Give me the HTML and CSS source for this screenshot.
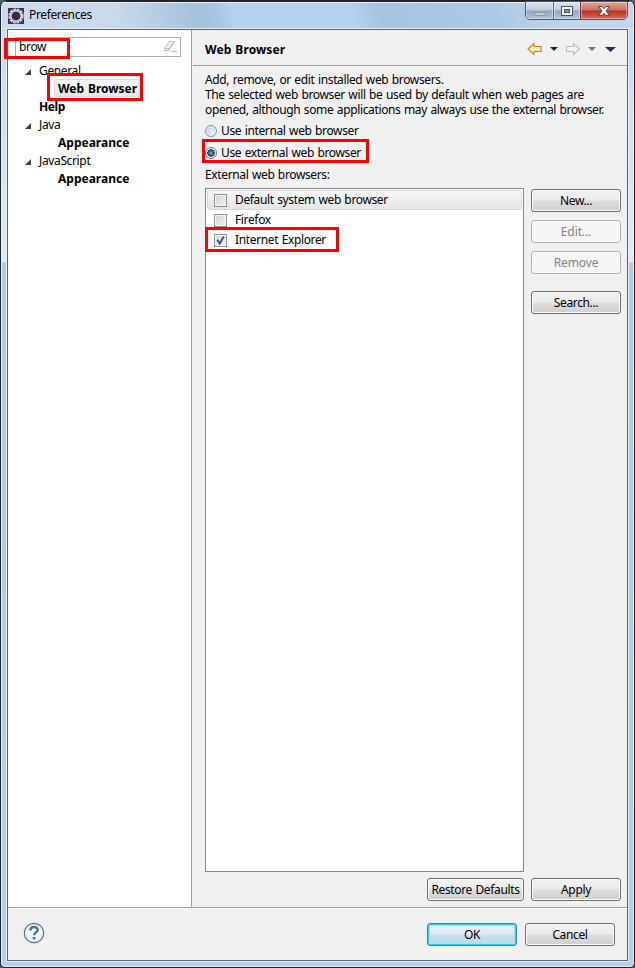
FILE: index.html
```html
<!DOCTYPE html>
<html lang="en">
<head>
  <meta charset="UTF-8" />
  <title>Preferences</title>
  <link rel="stylesheet" href="styles.css">
</head>
<body>
  <div class="window">
    <!-- TITLE BAR -->
    <div class="titlebar">
      <svg class="app-icon" width="16" height="16" viewBox="0 0 16 16">
        <rect width="16" height="16" fill="#40345f"/>
        <circle cx="8" cy="8" r="6.500" fill="none" stroke="#d8d6de" stroke-width="2.200" stroke-dasharray="2.600 0.800"/>
        <circle cx="8" cy="8" r="5.200" fill="none" stroke="#d0ced4" stroke-width="1.800"/>
        <circle cx="8" cy="8" r="4.200" fill="#332c45"/>
      </svg>
      <span class="title">Preferences</span>
      <div class="controls">
        <div class="ctl"><svg width="14" height="14" viewBox="0 0 14 14"><rect x="1.5" y="8.5" width="11" height="3" fill="#c4ced9" stroke="#8b98a9"/></svg></div>
        <div class="ctl ctl-max"><svg width="14" height="14" viewBox="0 0 14 14"><rect x="1.5" y="2.5" width="11" height="9" fill="#f4f4f4" stroke="#4c5366"/><rect x="4.5" y="5.5" width="5" height="3" fill="#8396ae" stroke="#4c5366"/></svg></div>
        <div class="ctl ctl-close"><svg width="14" height="14" viewBox="0 0 14 14"><path d="M1.5 2.5h3.6L7 4.700l1.900-2.200h3.600L9 7l3.500 4.500H8.900L7 9.300l-1.900 2.200H1.500L5 7z" fill="#f5f5f5" stroke="#5b4852"/></svg></div>
      </div>
    </div>

    <div class="client">
      <div class="main">
        <!-- LEFT TREE -->
        <div class="sidebar">
          <div class="search">
            <span>brow</span>
            <svg width="15" height="13" viewBox="0 0 15 13"><path d="M6.500 1.500h5l-5.500 9h-4.500v-2z" fill="#f2f2f2" stroke="#bcbcbc"/><path d="M2 8.500h4.300l4.700-7M6.300 8.500l-.3 2M8 11.500h6" fill="none" stroke="#bcbcbc"/></svg>
          </div>
          <ul class="tree">
            <li><i class="arrow"></i>General</li>
            <li class="child"><span class="selected">Web Browser</span></li>
            <li class="bold">Help</li>
            <li><i class="arrow"></i>Java</li>
            <li class="child">Appearance</li>
            <li><i class="arrow"></i>JavaScript</li>
            <li class="child">Appearance</li>
          </ul>
        </div>

        <!-- PREFERENCE PAGE -->
        <div class="page">
          <div class="page-head">
            <h1>Web Browser</h1>
            <svg class="nav" width="92" height="14" viewBox="0 0 92 14">
              <path d="M1 7l6-5.500v3h7v5H7v3z" fill="#fdeeb0" stroke="#b9862a" stroke-width="1.100"/>
              <path d="M23 5h8l-4 4z" fill="#222"/>
              <path d="M52.500 7l-6-5.500v3h-7v5h7v3z" fill="#f4f4f1" stroke="#bdbdb5" stroke-width="1.100"/>
              <path d="M61 5h8l-4 4z" fill="#77747c"/>
              <path d="M78 5h11l-5.500 5z" fill="#2e2a58"/>
            </svg>
          </div>
          <div class="page-body">
            <p class="desc">Add, remove, or edit installed web browsers.<br>
              The selected web browser will be used by default when web pages are<br>
              opened, although some applications may always use the external browser.</p>
            <div class="radio"><i class="dot"></i><span>Use internal web browser</span></div>
            <div class="radio"><i class="dot on"></i><span>Use external web browser</span></div>
            <div class="label">External web browsers:</div>
            <div class="columns">
              <div class="list">
                <div class="item focused"><i class="check"></i><span>Default system web browser</span></div>
                <div class="item"><i class="check"></i><span>Firefox</span></div>
                <div class="item"><i class="check"><svg width="11" height="11" viewBox="0 0 11 11"><path d="M2.300 4.800l2.400 3.700L8.800 1.600" fill="none" stroke="#42539b" stroke-width="2"/></svg></i><span>Internet Explorer</span></div>
              </div>
              <div class="actions">
                <div class="btn">New...</div>
                <div class="btn disabled">Edit...</div>
                <div class="btn disabled">Remove</div>
                <div class="btn search-btn">Search...</div>
              </div>
            </div>
            <div class="apply-row">
              <div class="btn wide">Restore Defaults</div>
              <div class="btn">Apply</div>
            </div>
          </div>
        </div>
      </div>

      <!-- DIALOG FOOTER -->
      <div class="footer">
        <svg class="help" width="22" height="22" viewBox="0 0 22 22">
          <circle cx="11" cy="11" r="9.700" fill="#f1f2f4" stroke="#5a7096" stroke-width="1.200"/>
          <path d="M7.400 8.500C7.400 3.700 14.700 4 14.700 7.900c0 2.600-3.600 2.600-3.600 5.300" fill="none" stroke="#5a7096" stroke-width="2.500"/>
          <rect x="9.700" y="15" width="2.800" height="2.500" fill="#5a7096"/>
        </svg>
        <div class="btn ok">OK</div>
        <div class="btn">Cancel</div>
      </div>
    </div>

    <!-- highlight frames -->
    <div class="mark mark-search"></div>
    <div class="mark mark-tree"></div>
    <div class="mark mark-radio"></div>
    <div class="mark mark-item"></div>
  </div>
</body>
</html>
```
FILE: styles.css
```css
* {
  box-sizing: border-box;
}

body {
  margin: 0;
  background: #55585c;
  font-family: "Noto Sans", "Open Sans", sans-serif;
  font-size: 12px;
  letter-spacing: -0.36px;
  word-spacing: 0.7px;
  color: #000;
  white-space: nowrap;
}

.window {
  position: relative;
  display: flex;
  flex-direction: column;
  width: 635px;
  height: 968px;
  padding: 0 6px 6px;
  border: 1px solid #20242c;
  border-radius: 7px 7px 5px 5px;
  background: linear-gradient(#c3d9ee 0, #e0ebf6 261px, #b0cbe7 262px, #b5d0eb 100%);
  box-shadow: inset 0 0 0 1px #e6f4fc;
  overflow: hidden;
}

.titlebar {
  display: flex;
  align-items: center;
  height: 28px;
  margin: 0 -5px;
  padding-left: 6px;
  background: linear-gradient(75deg, #cbdbec 0, #c9daeb 18%, #a6c1dc 31%, #a9c4e0 34%, #b6d2ee 37%, #b6d2ee 55%, #a7c3df 60%, #adc9e5 78%, #c3d6eb 90%);
  box-shadow: inset 0 1px #20242c, inset 0 2px #e6f1fa, inset 0 -1px #dcebf7;
  flex: none;
}

.app-icon {
  margin-top: 1px;
}

.title {
  margin: -2px 0 0 5px;
}

.controls {
  display: flex;
  align-self: flex-start;
  width: 103px;
  height: 19px;
  margin-left: auto;
  margin-right: 5px;
  border: 1px solid #4c5568;
  border-radius: 0 0 5px 5px;
  overflow: hidden;
}

.ctl {
  display: flex;
  justify-content: center;
  align-items: center;
  width: 28px;
  background: linear-gradient(#dce5ee 0, #bccbdc 48%, #92a7be 52%, #b2c5d9 100%);
  box-shadow: inset 0 0 0 1px rgba(255, 255, 255, 0.4);
}

.ctl-max {
  width: 27px;
  border-left: 1px solid #5f6c80;
}

.ctl-close {
  width: 48px;
  border-left: 1px solid #5f3038;
  background: linear-gradient(#e1a89d 0, #cf6d5d 48%, #b5301c 52%, #d7705b 100%);
}

.client {
  display: flex;
  flex-direction: column;
  flex: 1;
  border: 1px solid #56636f;
  background: #f0f0f0;
  box-shadow: 0 0 0 1px #e4f0fa;
}

.main {
  display: flex;
  flex: 1;
  border-bottom: 1px solid #a0a0a0;
}

.sidebar {
  width: 184px;
  flex: none;
  padding: 7px;
  border-right: 1px solid #a0a0a0;
  background: #fff;
}

.search {
  display: flex;
  justify-content: space-between;
  align-items: center;
  width: 166px;
  height: 20px;
  padding: 0 2px 1px 3px;
  border: 1px solid #abadb3;
}

.tree {
  margin: 4px 0 0;
  padding: 0;
  list-style: none;
}

.tree li {
  display: flex;
  align-items: center;
  height: 18px;
  padding-left: 24px;
}

.tree .bold {
  font-weight: bold;
}

.tree .child {
  padding-left: 43px;
  font-weight: bold;
  letter-spacing: 0;
}

.selected {
  height: 18px;
  margin-left: -4px;
  padding: 0 3px;
  line-height: 17px;
  border: 1px solid #dcdcdc;
  border-radius: 3px;
  background: linear-gradient(#f8f8f8, #e6e6e6);
}

.arrow {
  width: 6px;
  height: 6px;
  margin: 4px 8px 0 -14px;
  background: #404040;
  clip-path: polygon(100% 0, 100% 100%, 0 100%);
}

.page {
  display: flex;
  flex-direction: column;
  flex: 1;
  min-width: 0;
  margin-left: 1px;
}

.page-head {
  display: flex;
  align-items: center;
  justify-content: space-between;
  height: 36px;
  padding: 3px 8px 0 12px;
  border-bottom: 1px solid #a0a0a0;
}

h1 {
  margin: 0;
  font-size: 12px;
  letter-spacing: 0.1px;
}

.page-body {
  display: flex;
  flex-direction: column;
  flex: 1;
  padding: 6px 6px 6px 12px;
}

.desc {
  margin: 0 0 3px;
  line-height: 15px;
}

.radio {
  display: flex;
  align-items: center;
  height: 22px;
}

.radio span {
  margin-top: -2px;
}

.dot {
  width: 12px;
  height: 12px;
  margin-right: 4px;
  border: 1px solid #8a9199;
  border-radius: 50%;
  background: radial-gradient(circle at 70% 70%, #e8f7fd, #a5cde5);
  box-shadow: inset 0 0 0 1px #eef3f6;
}

.dot.on {
  border-color: #6b7785;
  background: radial-gradient(circle, #52b5df 0, #173a5c 3.500px, #e0e7ec 4px);
}

.label {
  height: 24px;
  line-height: 21px;
}

.columns {
  display: flex;
  flex: 1;
  gap: 7px;
  margin-bottom: 6px;
}

.list {
  width: 319px;
  padding: 1px;
  border: 1px solid #828790;
  background: #fff;
}

.item {
  display: flex;
  align-items: center;
  height: 20px;
  padding-left: 7px;
}

.item span {
  margin-top: -2px;
}

.item.focused {
  padding-left: 6px;
  border: 1px solid #d9d9d9;
  border-radius: 3px;
  background: linear-gradient(#f8f8f8, #e5e5e5);
}

.check {
  width: 13px;
  height: 13px;
  margin: 1px 8px 0 0;
  border: 1px solid #8e8f8f;
  background: linear-gradient(135deg, #cfd3d7, #f4f4f4);
  box-shadow: inset 0 0 0 1px #f4f4f4;
}

.check svg {
  display: block;
}

.actions {
  display: flex;
  flex-direction: column;
  gap: 8px;
  padding-top: 1px;
}

.btn {
  width: 90px;
  height: 23px;
  border: 1px solid #707070;
  border-radius: 3px;
  background: linear-gradient(#f2f2f2 0, #ebebeb 48%, #dddddd 52%, #cfcfcf 100%);
  box-shadow: inset 0 0 0 1px #fafafa;
  line-height: 21px;
  text-align: center;
}

.btn.disabled {
  border-color: #adb2b5;
  background: #f4f4f4;
  color: #838383;
  letter-spacing: -0.1px;
}

.btn.search-btn {
  margin-top: 9px;
}

.btn.wide {
  width: 97px;
}

.btn.ok {
  border-color: #3c7fb1;
  background: linear-gradient(#eaf3f8 0, #dceaf3 48%, #c8e0ee 52%, #b8d8eb 100%);
  box-shadow: inset 0 0 0 1px #30cdf8, inset 0 0 0 2px #9fe3f8;
}

.apply-row {
  display: flex;
  justify-content: flex-end;
  gap: 7px;
}

.footer {
  display: flex;
  gap: 8px;
  height: 52px;
  padding: 14px 12px 0 15px;
  border-top: 1px solid #fff;
}

.help {
  margin: -1px auto 0 0;
}

/* red frames lie over the controls */
.mark {
  position: absolute;
  border: 3px solid #f00;
}

.mark-search {
  left: 3px;
  top: 37px;
  width: 66px;
  height: 21px;
}

.mark-tree {
  left: 46px;
  top: 72px;
  width: 96px;
  height: 28px;
}

.mark-radio {
  left: 201px;
  top: 138px;
  width: 167px;
  height: 24px;
}

.mark-item {
  left: 204px;
  top: 226px;
  width: 134px;
  height: 25px;
}
```
